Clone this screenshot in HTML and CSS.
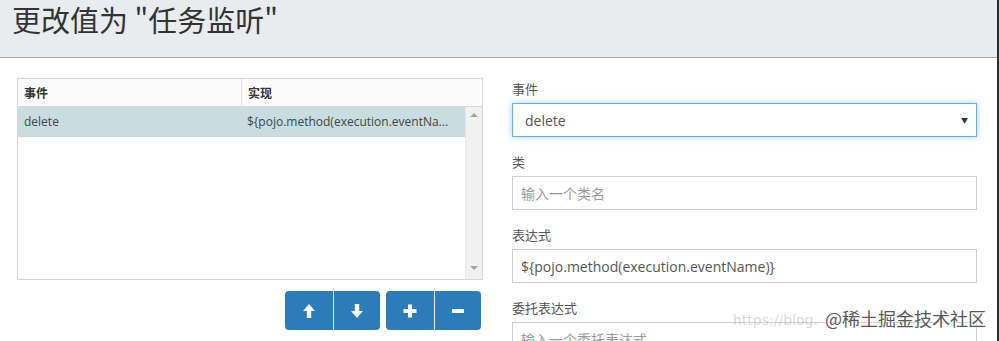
FILE: index.html
```html
<!DOCTYPE html>
<html lang="zh-CN">
<head>
    <meta charset="UTF-8">
    <meta name="viewport" content="width=device-width, initial-scale=1.0">
    <title>更改值为 "任务监听"</title>
    <link rel="stylesheet" href="styles.css">
</head>
<body>
    <div class="page">
        <header class="modal-header">
            <h1>更改值为 "任务监听"</h1>
        </header>

        <main class="modal-body">
            <section class="list-col">
                <div class="grid">
                    <div class="grid-head">
                        <div class="cell c1">事件</div>
                        <div class="cell c2">实现</div>
                    </div>
                    <div class="grid-body">
                        <div class="rows">
                            <div class="grid-row selected">
                                <div class="cell c1">delete</div>
                                <div class="cell c2">${pojo.method(execution.eventNa...</div>
                            </div>
                        </div>
                        <div class="scrollbar">
                            <span class="arrow up"></span>
                            <span class="arrow down"></span>
                        </div>
                    </div>
                </div>

                <div class="actions">
                    <div class="btn-group">
                        <button type="button" class="btn">
                            <svg width="14" height="16" viewBox="0 0 14 16"><path d="M7 1L13 8H9.2V15H4.8V8H1Z" fill="#fff"/></svg>
                        </button>
                        <button type="button" class="btn">
                            <svg width="14" height="16" viewBox="0 0 14 16"><path d="M7 15L13 8H9.2V1H4.8V8H1Z" fill="#fff"/></svg>
                        </button>
                    </div>
                    <div class="btn-group">
                        <button type="button" class="btn">
                            <svg width="14" height="14" viewBox="0 0 14 14"><path d="M5 0.5h4v4.5h4.5v4H9v4.5H5V9H0.5V5H5z" fill="#fff"/></svg>
                        </button>
                        <button type="button" class="btn">
                            <svg width="14" height="14" viewBox="0 0 14 14"><path d="M1 5h12v4H1z" fill="#fff"/></svg>
                        </button>
                    </div>
                </div>
            </section>

            <section class="form-col">
                <div class="field">
                    <label>事件</label>
                    <div class="select focused">
                        <span>delete</span>
                        <span class="caret">▼</span>
                    </div>
                </div>
                <div class="field">
                    <label>类</label>
                    <input type="text" placeholder="输入一个类名">
                </div>
                <div class="field">
                    <label>表达式</label>
                    <input type="text" value="${pojo.method(execution.eventName)}">
                </div>
                <div class="field">
                    <label>委托表达式</label>
                    <input type="text" placeholder="输入一个委托表达式">
                </div>
            </section>
        </main>

        <div class="watermark">
            <span class="wm-url">https://blog.</span>
            <span class="wm-main">@稀土掘金技术社区</span>
        </div>
    </div>
</body>
</html>
```

FILE: styles.css
```css
/* Estilos generales */
body {
    margin: 0;
    padding: 0;
    font-family: 'Open Sans', 'Noto Sans CJK SC', sans-serif;
    color: #333;
    background-color: #ffffff;
    overflow: hidden;
}

.page {
    position: relative;
    width: 997px;
    height: 341px;
    border-right: 2px solid #2c2c2c;
    overflow: hidden;
}

.modal-header {
    height: 57px;
    background-color: #e9ecef;
    border-bottom: 1px solid #a9abae;
    padding-left: 12px;
}

.modal-header h1 {
    margin: 0;
    font-family: 'Noto Sans CJK SC', sans-serif;
    font-weight: 400;
    font-size: 29px;
    line-height: 38px;
    color: #333;
}

.modal-body {
    display: grid;
    grid-template-columns: 466px 465px;
    column-gap: 29px;
    padding: 20px 20px 0 17px;
}

/* Lista */
.grid {
    border: 1px solid #d6d6d6;
    font-size: 12px;
}

.grid-head {
    display: flex;
    height: 27px;
    background-color: #fbfbfb;
    border-bottom: 1px solid #d9d9d9;
}

.grid-head .cell {
    font-family: 'Noto Sans CJK SC', sans-serif;
    font-weight: 700;
    line-height: 27px;
    color: #333;
}

.cell {
    padding: 0 6px;
    white-space: nowrap;
    overflow: hidden;
}

.c1 {
    width: 211px;
}

.grid-head .c1 {
    border-right: 1px solid #e0e0e0;
}

.grid-head .c2 {
    flex: 1;
}

.grid-body {
    display: flex;
    height: 172px;
}

.rows {
    flex: 1;
}

.grid-row {
    display: flex;
    height: 30px;
    line-height: 30px;
    color: #444;
}

.grid-row .c1 {
    width: 212px;
}

.grid-row .c2 {
    padding-left: 5px;
}

.grid-row.selected {
    background-color: #c9dde1;
}

.scrollbar {
    position: relative;
    width: 16px;
    background-color: #f1f1f1;
    border-left: 1px solid #e8e8e8;
}

.arrow {
    position: absolute;
    left: 4px;
    width: 0;
    height: 0;
    border-left: 4px solid transparent;
    border-right: 4px solid transparent;
}

.arrow.up {
    top: 6px;
    border-bottom: 4px solid #a3a3a3;
}

.arrow.down {
    bottom: 9px;
    border-top: 4px solid #a3a3a3;
}

.actions {
    display: flex;
    justify-content: flex-end;
    gap: 6px;
    margin-top: 11px;
    padding-right: 2px;
}

.btn-group {
    display: flex;
    border-radius: 4px;
    overflow: hidden;
}

.btn {
    display: flex;
    align-items: center;
    justify-content: center;
    width: 48px;
    height: 39px;
    padding: 0;
    border: none;
    background-color: #2b7cb9;
    cursor: pointer;
}

.btn + .btn {
    width: 47px;
    border-left: 1px solid #e6eef5;
}

/* Formulario */
.form-col {
    padding-top: 1px;
}

.field {
    margin-bottom: 15px;
}

.field label {
    display: block;
    font-family: 'Noto Sans CJK SC', sans-serif;
    font-size: 13px;
    line-height: 20px;
    margin-bottom: 4px;
    color: #555;
}

.select,
.field input {
    box-sizing: border-box;
    width: 100%;
    height: 34px;
    border: 1px solid #cfcfcf;
    font-family: 'Open Sans', 'Noto Sans CJK SC', sans-serif;
    font-size: 14px;
    color: #555;
    background-color: #fff;
}

.field input {
    display: block;
    padding: 0 8px;
    outline: none;
}

.field input::placeholder {
    color: #9a9a9a;
}

.select {
    display: flex;
    align-items: center;
    justify-content: space-between;
    padding: 0 8px 0 12px;
}

.select.focused {
    border-color: #66afe9;
    box-shadow: 0 0 6px rgba(102, 175, 233, 0.6);
}

.caret {
    font-size: 7px;
    color: #333;
}

/* Marca de agua */
.watermark {
    position: absolute;
    left: 733px;
    top: 306px;
    width: 260px;
    height: 26px;
}

.wm-url {
    position: absolute;
    left: 0;
    top: 6px;
    font-family: 'DejaVu Sans', sans-serif;
    font-size: 14px;
    color: rgba(170, 170, 170, 0.45);
    white-space: nowrap;
}

.wm-main {
    position: absolute;
    left: 92px;
    top: 0;
    font-family: 'Noto Sans CJK SC', sans-serif;
    font-size: 18px;
    line-height: 24px;
    color: #5a5a5a;
    text-shadow: 0 0 2px #fff, 0 0 2px #fff;
    white-space: nowrap;
}
```
